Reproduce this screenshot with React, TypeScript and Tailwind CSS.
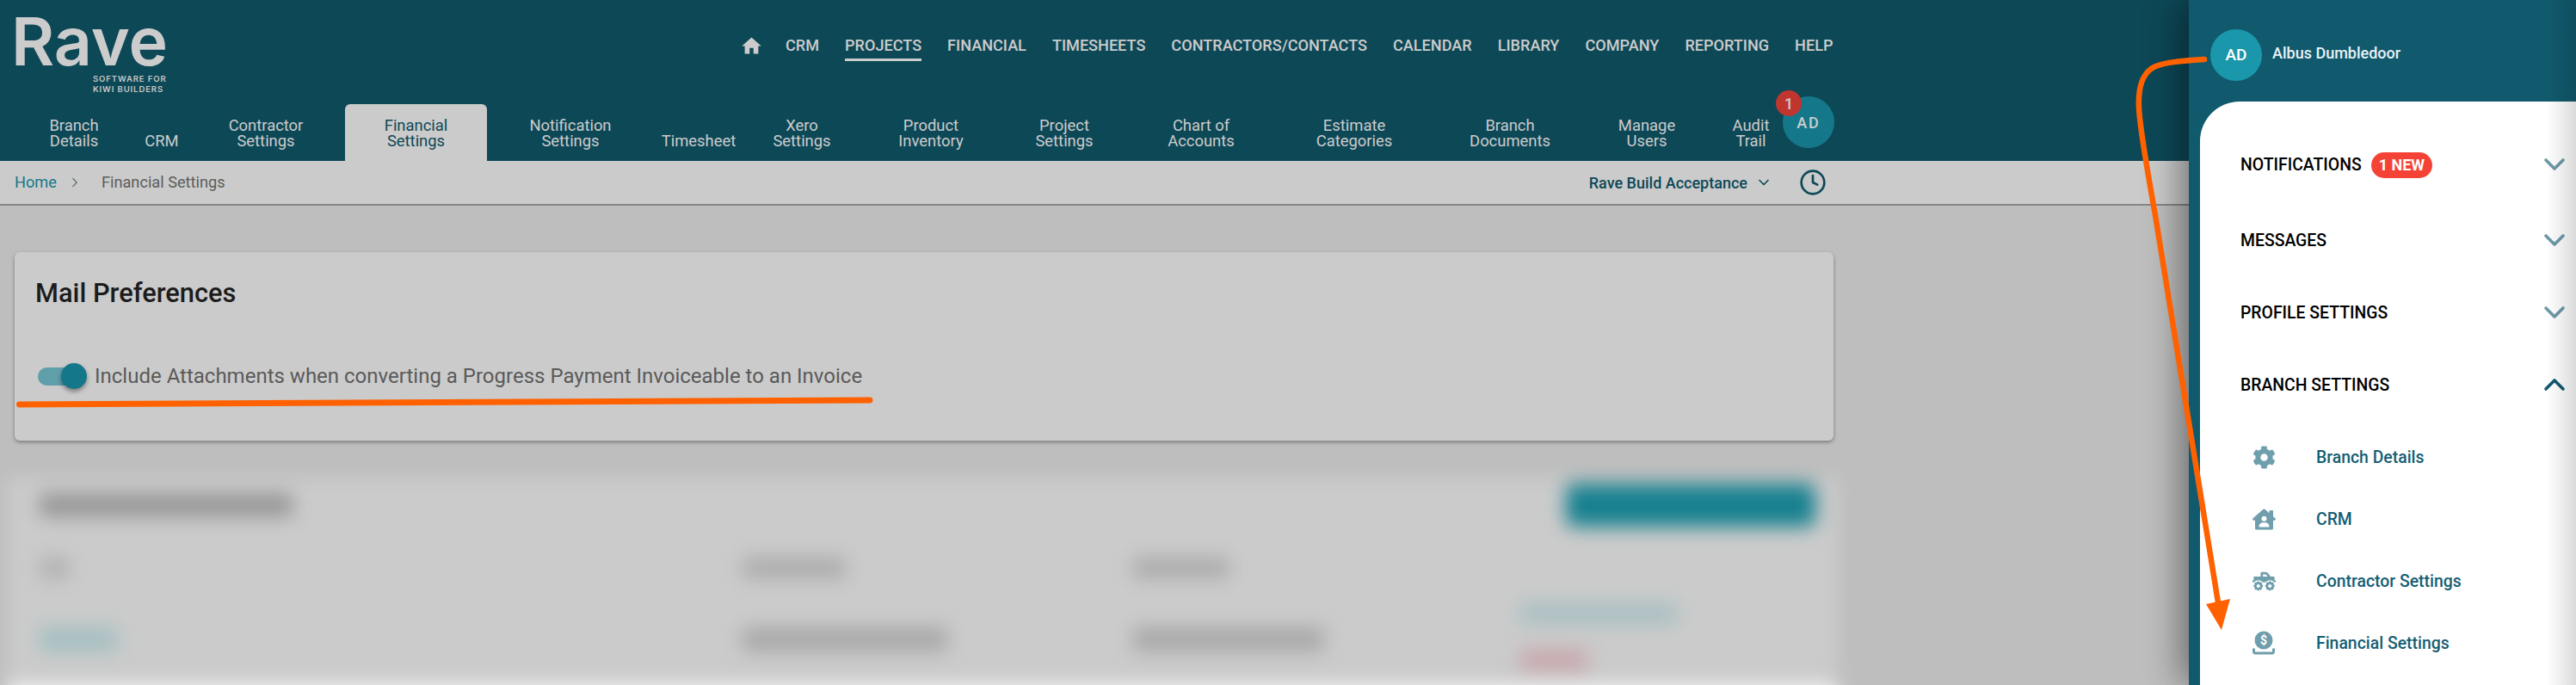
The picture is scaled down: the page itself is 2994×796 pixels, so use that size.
import { ChevronDown, ChevronRight, ChevronUp, Clock } from 'lucide-react';
import { FaCog, FaHouseUser, FaTruckMonster } from 'react-icons/fa';
import { MdHome } from 'react-icons/md';

const topLinks = ['CRM', 'PROJECTS', 'FINANCIAL', 'TIMESHEETS', 'CONTRACTORS/CONTACTS', 'CALENDAR', 'LIBRARY', 'COMPANY', 'REPORTING', 'HELP'];

const tabs = [
  { w: 'w-[146px]', lines: ['Branch', 'Details'] },
  { w: 'w-[58px]', lines: ['CRM'] },
  { w: 'w-[184px]', lines: ['Contractor', 'Settings'] },
  { w: 'w-[165px]', lines: ['Financial', 'Settings'], active: true },
  { w: 'w-[194px]', lines: ['Notification', 'Settings'] },
  { w: 'w-[104px]', lines: ['Timesheet'] },
  { w: 'w-[136px]', lines: ['Xero', 'Settings'] },
  { w: 'w-[164px]', lines: ['Product', 'Inventory'] },
  { w: 'w-[146px]', lines: ['Project', 'Settings'] },
  { w: 'w-[172px]', lines: ['Chart of', 'Accounts'] },
  { w: 'w-[184px]', lines: ['Estimate', 'Categories'] },
  { w: 'w-[178px]', lines: ['Branch', 'Documents'] },
  { w: 'w-[140px]', lines: ['Manage', 'Users'] },
  { w: 'w-[102px]', lines: ['Audit', 'Trail'] },
];

const Logo = () => (
  <div className="flex w-[200px] flex-col items-end pl-[13px] pt-[10px]">
    <span className="w-full font-['Inter'] text-[77px] font-semibold leading-[76px] text-[#cccccc]">Rave</span>
    <span className="mr-[6px] w-[86px] font-['Inter'] text-[9.5px] font-semibold leading-[12px] tracking-[0.9px] text-[#c8c8c8]">
      SOFTWARE FOR KIWI BUILDERS
    </span>
  </div>
);

const Header = () => (
  <header className="relative h-[187px] bg-[#0d4857]">
    <div className="flex h-[121px]">
      <Logo />
      <nav className="ml-[660px] flex h-[106px] items-center gap-[30px] text-[18.1px] font-medium text-[#cccccc]">
        <MdHome size={27} className="-mr-[4px]" />
        {topLinks.map((l) => (
          <span key={l} className={l === 'PROJECTS' ? 'relative' : ''}>
            {l}
            {l === 'PROJECTS' && <span className="absolute left-0 right-0 top-[29px] h-[3px] bg-[#cccccc]" />}
          </span>
        ))}
      </nav>
    </div>
    <div className="flex h-[66px] pl-[13px]">
      {tabs.map((t) => (
        <div
          key={t.lines.join(' ')}
          className={`flex shrink-0 flex-col items-center justify-end pb-[14px] text-[18.4px] leading-[18px] ${t.w} ${
            t.active ? 'rounded-t-[6px] bg-[#cbcbcb] text-[#0d4857]' : 'text-[#cccccc]'
          }`}
        >
          {t.lines.map((line) => (
            <span key={line}>{line}</span>
          ))}
        </div>
      ))}
      <div className="relative -ml-[14px] -mt-[9px] flex h-[60px] w-[60px] shrink-0 items-center justify-center rounded-full bg-[#14788a] text-[18px] font-medium tracking-[2px] text-[#cccccc]">
        AD
        <span className="absolute -left-[8px] -top-[7px] flex h-[30px] w-[30px] items-center justify-center rounded-full bg-[#c0352d] text-[18px] tracking-normal">1</span>
      </div>
    </div>
  </header>
);

const Breadcrumb = () => (
  <div className="flex h-[52px] items-center border-b-2 border-[#868686] bg-[#cbcbcb] pl-[17px] pr-[871px] text-[18.2px]">
    <span className="text-[#14788a]">Home</span>
    <ChevronRight size={18} strokeWidth={1.6} className="ml-[12px] mr-[22px] text-[#5f6f74]" />
    <span className="text-[#5c5c5c]">Financial Settings</span>
    <div className="ml-auto flex items-center text-[18px] font-medium text-[#0d4857]">
      Rave Build Acceptance
      <ChevronDown size={20} strokeWidth={2} className="ml-[9px]" />
    </div>
    <Clock size={32} strokeWidth={2} className="ml-[31px] text-[#0d4857]" />
  </div>
);

const MailCard = () => (
  <section className="ml-[17px] mt-[54px] h-[219px] w-[2114px] rounded-[6px] bg-[#cbcbcb] pl-[24px] pt-[28px] shadow-[0_2px_4px_rgba(0,0,0,0.35)]">
    <h2 className="text-[30.8px] font-medium leading-[40px] text-[#1c1c1c]">Mail Preferences</h2>
    <div className="ml-[3px] mt-[61px] flex h-[30px] items-center">
      <div className="relative h-[21px] w-[47px] rounded-full bg-[#5f9fa9]">
        <span className="absolute -right-[10px] -top-[5px] h-[30px] w-[30px] rounded-full bg-[#14788a] shadow-[0_3px_5px_rgba(0,0,0,0.4)]" />
      </div>
      <span className="ml-[19px] text-[24px] text-[#5a5a5a]">Include Attachments when converting a Progress Payment Invoiceable to an Invoice</span>
    </div>
  </section>
);

const BlurredCard = () => (
  <div className="[filter:blur(11px)]">
    <section className="ml-[8px] mt-[43px] h-[232px] w-[2128px] bg-[#cbcbcb] pl-[38px] pr-[26px] pt-[7px]">
      <div className="flex items-center justify-between">
        <div className="h-[26px] w-[294px] bg-[#949494]" />
        <div className="h-[50px] w-[290px] rounded-[8px] bg-[#17808f]" />
      </div>
      <div className="mt-[36px] grid grid-cols-[817px_454px_450px_1fr] items-start">
        <div className="h-[24px] w-[34px] bg-[#b0b0b0]" />
        <div className="h-[24px] w-[120px] bg-[#ababab]" />
        <div className="h-[24px] w-[112px] bg-[#ababab]" />
        <div />
        <div className="mt-[57px] h-[28px] w-[90px] bg-[#a4bfc1]" />
        <div className="mt-[57px] h-[28px] w-[238px] bg-[#a8a8a8]" />
        <div className="mt-[57px] h-[28px] w-[222px] bg-[#a8a8a8]" />
        <div className="mt-[29px] flex flex-col gap-[30px]">
          <div className="h-[24px] w-[182px] bg-[#a8bfc2]" />
          <div className="h-[24px] w-[78px] bg-[#c8a6ac]" />
        </div>
      </div>
    </section>
    <div className="ml-[8px] mt-[6px] h-[40px] w-[2128px] bg-[#f2f2f2]" />
  </div>
);

const Account = ({ title, badge, open }: { title: string; badge?: string; open?: boolean }) => (
  <div className="flex h-[30px] items-center justify-between pr-[5px] text-[19.4px] font-medium text-black">
    <div className="flex items-center gap-[11px] pt-[1px]">
      {title}
      {badge && <span className="flex h-[30px] items-center rounded-full bg-[#f44336] px-[9px] text-[18px] font-bold text-white">{badge}</span>}
    </div>
    {open ? (
      <ChevronUp size={40} strokeWidth={2.2} className="text-[#115a6e]" />
    ) : (
      <ChevronDown size={40} strokeWidth={2.2} className="text-[#6e9aa8]" />
    )}
  </div>
);

const MoneyIcon = () => (
  <svg width="28" height="28" viewBox="0 0 28 28" fill="#6f9eac">
    <circle cx="14" cy="11" r="10.5" />
    <path d="M2.5 20.5v3.5a2 2 0 0 0 2 2h19a2 2 0 0 0 2-2v-3.5" fill="none" stroke="#6f9eac" strokeWidth="3" />
    <text x="14" y="16" textAnchor="middle" fontSize="14" fontWeight="700" fill="#ffffff" fontFamily="Roboto">$</text>
  </svg>
);

const SubItem = ({ icon, label }: { icon: React.ReactNode; label: string }) => (
  <div className="flex h-[72px] items-center">
    <div className="flex w-[98px] justify-center pr-[24px] text-[#6f9eac]">{icon}</div>
    <span className="pt-[1px] text-[19.4px] font-medium text-[#155e73]">{label}</span>
  </div>
);

const Sidebar = () => (
  <aside className="absolute right-0 top-0 flex h-full w-[450px] flex-col bg-[#115a6e] pl-[13px] shadow-[-8px_0_40px_rgba(0,0,0,0.45)]">
    <div className="flex h-[118px] items-start pl-[12px] pt-[34px]">
      <div className="flex h-[60px] w-[60px] items-center justify-center rounded-full bg-[#1a97ab] text-[19px] font-medium text-white">AD</div>
      <span className="ml-[12px] mt-[14px] text-[18px] font-medium text-[#eaf3f5]">Albus Dumbledoor</span>
    </div>
    <div className="flex-1 rounded-tl-[46px] bg-white pl-[47px] pt-[58px]">
      <Account title="NOTIFICATIONS" badge="1 NEW" />
      <div className="mt-[58px]"><Account title="MESSAGES" /></div>
      <div className="mt-[54px]"><Account title="PROFILE SETTINGS" /></div>
      <div className="mt-[54px]"><Account title="BRANCH SETTINGS" open /></div>
      <div className="-ml-[10px] mt-[33px]">
        <SubItem icon={<FaCog size={27} />} label="Branch Details" />
        <SubItem icon={<FaHouseUser size={27} />} label="CRM" />
        <SubItem icon={<FaTruckMonster size={27} />} label="Contractor Settings" />
        <SubItem icon={<MoneyIcon />} label="Financial Settings" />
      </div>
    </div>
    <div className="absolute bottom-0 right-0 top-0 w-[34px] bg-gradient-to-r from-transparent to-[rgba(0,0,0,0.14)]" />
  </aside>
);

const Annotations = () => (
  <svg className="pointer-events-none absolute inset-0" width="2994" height="796" viewBox="0 0 2994 796">
    <path d="M22.5 470 L1011 465" stroke="#ff6100" strokeWidth="7" strokeLinecap="round" fill="none" />
    <path d="M2562 69 C2530 71 2510 73 2500 80 C2488 89 2485 105 2486 125 C2487 150 2497 205 2505 250 L2578 700" stroke="#ff6100" strokeWidth="6.5" strokeLinecap="round" fill="none" />
    <polygon points="2564,702 2592,696 2582,732" fill="#ff6100" />
  </svg>
);

export default function App() {
  return (
    <div className="relative h-[796px] w-[2994px] overflow-hidden bg-[#bebebe] font-['Roboto',sans-serif]">
      <Header />
      <Breadcrumb />
      <MailCard />
      <BlurredCard />
      <Sidebar />
      <Annotations />
    </div>
  );
}
